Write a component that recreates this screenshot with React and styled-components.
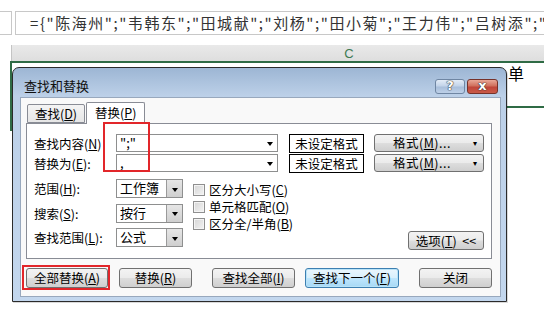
import React from "react";
import styled, { createGlobalStyle } from "styled-components";

const GlobalStyle = createGlobalStyle`
  html, body {
    margin: 0;
    padding: 0;
    background: #fff;
  }
  body {
    font-family: "Noto Sans CJK SC", "Liberation Sans", sans-serif;
    font-size: 12px;
    color: #000;
  }
`;

const App = () => {
  return (
    <Page>
      <GlobalStyle />
      <FormulaRow>
        <NameBox />
        <FormulaBox>
          ={"{"}"陈海州";"韦韩东";"田城献";"刘杨";"田小菊";"王力伟";"吕树添";"李珏"
        </FormulaBox>
      </FormulaRow>
      <HeaderRow>
        <ColHead width={187} />
        <ColHead width={300} active>
          C
        </ColHead>
        <ColHead width={46} />
      </HeaderRow>
      <SheetArea>
        <Gutter />
        <Range>
          <CellText>单</CellText>
          <RowLine />
        </Range>
      </SheetArea>

      <Dialog>
        <TitleBar>
          <Title>查找和替换</Title>
          <Controls>
            <CaptionButton>?</CaptionButton>
            <CaptionButton close>x</CaptionButton>
          </Controls>
        </TitleBar>
        <Client>
          <Tabs>
            <Tab>
              查找(<u>D</u>)
            </Tab>
            <Tab selected>
              替换(<u>P</u>)
            </Tab>
          </Tabs>
          <Panel>
            <Mark />
            <FieldRow>
              <Label>
                查找内容(<u>N</u>)
              </Label>
              <Combo>
                <ComboText>";"</ComboText>
                <DropArrow />
              </Combo>
              <FormatBox>未设定格式</FormatBox>
              <FormatButton>
                <span>
                  格式(<u>M</u>)...
                </span>
                <Tick>▾</Tick>
              </FormatButton>
            </FieldRow>
            <FieldRow>
              <Label>
                替换为(<u>E</u>):
              </Label>
              <Combo>
                <ComboText>,</ComboText>
                <DropArrow />
              </Combo>
              <FormatBox>未设定格式</FormatBox>
              <FormatButton>
                <span>
                  格式(<u>M</u>)...
                </span>
                <Tick>▾</Tick>
              </FormatButton>
            </FieldRow>
            <Lower>
              <SelectCol>
                <SelectRow>
                  <Label>
                    范围(<u>H</u>):
                  </Label>
                  <Select>
                    <ComboText>工作簿</ComboText>
                    <DropArrow gray />
                  </Select>
                </SelectRow>
                <SelectRow>
                  <Label>
                    搜索(<u>S</u>):
                  </Label>
                  <Select>
                    <ComboText>按行</ComboText>
                    <DropArrow gray />
                  </Select>
                </SelectRow>
                <SelectRow>
                  <Label>
                    查找范围(<u>L</u>):
                  </Label>
                  <Select>
                    <ComboText>公式</ComboText>
                    <DropArrow gray />
                  </Select>
                </SelectRow>
              </SelectCol>
              <CheckCol>
                <CheckRow>
                  <Box />
                  <span>
                    区分大小写(<u>C</u>)
                  </span>
                </CheckRow>
                <CheckRow>
                  <Box />
                  <span>
                    单元格匹配(<u>O</u>)
                  </span>
                </CheckRow>
                <CheckRow>
                  <Box />
                  <span>
                    区分全/半角(<u>B</u>)
                  </span>
                </CheckRow>
              </CheckCol>
              <OptionsButton>
                选项(<u>T</u>)&nbsp;&nbsp;&lt;&lt;
              </OptionsButton>
            </Lower>
          </Panel>
          <ButtonRow>
            <Button width={82} marked>
              全部替换(<u>A</u>)
            </Button>
            <Button width={73} gap={11}>
              替换(<u>R</u>)
            </Button>
            <Button width={83} gap={20}>
              查找全部(<u>I</u>)
            </Button>
            <Button width={94} gap={10} focused>
              查找下一个(<u>F</u>)
            </Button>
            <Button width={73} gap={20}>
              关闭
            </Button>
          </ButtonRow>
        </Client>
      </Dialog>
    </Page>
  );
};

export default App;

const Page = styled.div`
  position: relative;
  width: 544px;
  height: 309px;
  overflow: hidden;
  padding-top: 11px;
  box-sizing: border-box;
`;

const FormulaRow = styled.div`
  display: flex;
  height: 24px;
  gap: 3px;
`;

const NameBox = styled.div`
  width: 11px;
  border: 1px solid #c8c8c8;
  border-left: none;
`;

const FormulaBox = styled.div`
  flex: 1;
  border: 1px solid #c8c8c8;
  border-right: none;
  padding-left: 14px;
  font-size: 15px;
  line-height: 22px;
  color: #333;
  white-space: nowrap;
  overflow: hidden;
  letter-spacing: 1.55px;
`;

const HeaderRow = styled.div`
  display: flex;
  margin: 10px 0 0 11px;
  height: 16px;
  background: linear-gradient(#e9e9e9, #dedede);
  border-left: 1px solid #c4c4c4;
`;

const ColHead = styled.div`
  width: ${(p) => p.width}px;
  flex-shrink: 0;
  text-align: center;
  font-family: "Liberation Sans", sans-serif;
  font-size: 13px;
  line-height: 18px;
  color: ${(p) => (p.active ? "#3d7a52" : "#444")};
`;

const SheetArea = styled.div`
  display: flex;
  height: 70px;
`;

const Gutter = styled.div`
  width: 10px;
`;

const Range = styled.div`
  position: relative;
  flex: 1;
  border-top: 2px solid #2f6b45;
  border-left: 2px solid #2f6b45;
`;

const CellText = styled.div`
  position: absolute;
  left: 496px;
  top: 1px;
  font-size: 16px;
  line-height: 18px;
`;

const RowLine = styled.div`
  position: absolute;
  left: 494px;
  right: 0;
  top: 43px;
  height: 2px;
  background: #2f6b45;
`;

/* dialog floats over the sheet */
const Dialog = styled.div`
  position: absolute;
  left: 12px;
  top: 67px;
  width: 495px;
  height: 235px;
  box-sizing: border-box;
  border: 1px solid #2b2b2b;
  border-radius: 7px 7px 0 0;
  background: linear-gradient(#9db6d4, #bcd0e8 28px, #c3d7ee);
  display: flex;
  flex-direction: column;
  box-shadow: 1px 1px 0 rgba(0, 0, 0, 0.15);
`;

const TitleBar = styled.div`
  height: 29px;
  display: flex;
  align-items: flex-start;
  justify-content: space-between;
  padding: 0 8px 0 11px;
  flex-shrink: 0;
`;

const Title = styled.div`
  font-size: 13px;
  line-height: 14px;
  margin-top: 11px;
  color: #111;
`;

const Controls = styled.div`
  display: flex;
  gap: 2px;
  margin-top: 11px;
`;

const CaptionButton = styled.div`
  width: ${(p) => (p.close ? 31 : 30)}px;
  height: 15px;
  box-sizing: border-box;
  border: 1px solid ${(p) => (p.close ? "#76322a" : "#6f86a3")};
  border-radius: 3px;
  background: ${(p) =>
    p.close
      ? "linear-gradient(#e9a797, #d0705d 45%, #c0463a 55%, #c95a48)"
      : "linear-gradient(#e3ecf7, #c3d4e9 45%, #a9bfdb 55%, #bdd0e8)"};
  color: #fff;
  font-family: "DejaVu Sans", sans-serif;
  font-weight: bold;
  font-size: 13px;
  line-height: 12px;
  text-align: center;
  text-shadow: 0 0 1px #333, 0 0 1px #333, 0 0 1px #333;
`;

const Client = styled.div`
  flex: 1;
  margin: 0 5px 4px 7px;
  background: #f9f9f9;
  border: 1px solid #98a8bd;
  padding: 4px 0 0 5px;
  display: flex;
  flex-direction: column;
`;

const Tabs = styled.div`
  display: flex;
  align-items: flex-end;
  padding-left: 1px;
  position: relative;
  z-index: 1;
`;

const Tab = styled.div`
  box-sizing: border-box;
  height: ${(p) => (p.selected ? 22 : 19)}px;
  padding: 0 ${(p) => (p.selected ? 8 : 7)}px;
  margin-left: ${(p) => (p.selected ? 1 : 0)}px;
  margin-bottom: ${(p) => (p.selected ? -1 : 0)}px;
  border: 1px solid #898c95;
  border-bottom: ${(p) => (p.selected ? "none" : "1px solid #898c95")};
  background: ${(p) => (p.selected ? "#fff" : "linear-gradient(#f4f4f4, #e6e6e6)")};
  font-size: 12.5px;
  line-height: ${(p) => (p.selected ? 19 : 17)}px;
  border-radius: 2px 2px 0 0;
`;

const Panel = styled.div`
  position: relative;
  width: 466px;
  height: 136px;
  box-sizing: border-box;
  border: 1px solid #898c95;
  background: #fff;
  padding: 10px 7px 8px 7px;
  display: flex;
  flex-direction: column;
  gap: 2px;
`;

const Mark = styled.div`
  position: absolute;
  left: 76px;
  top: -2px;
  width: 47px;
  height: 50px;
  box-sizing: border-box;
  border: 2px solid #e2262a;
  z-index: 2;
`;

const FieldRow = styled.div`
  display: flex;
  align-items: center;
  height: 18px;
`;

const Label = styled.div`
  width: 82px;
  flex-shrink: 0;
  font-size: 12.5px;
  white-space: nowrap;
`;

const Combo = styled.div`
  width: 162px;
  height: 18px;
  box-sizing: border-box;
  border: 1px solid #8e8f8f;
  display: flex;
  align-items: stretch;
  background: #fff;
`;

const Select = styled(Combo)`
  width: 67px;
  height: 19px;
`;

const ComboText = styled.div`
  flex: 1;
  padding-left: 3px;
  font-size: 13px;
  line-height: 16px;
  white-space: nowrap;
`;

const DropArrow = styled.div`
  width: 16px;
  box-sizing: border-box;
  background: ${(p) => (p.gray ? "linear-gradient(#e6e6e6, #cfcfcf)" : "#fff")};
  border-left: 1px solid ${(p) => (p.gray ? "#9a9a9a" : "#fff")};
  display: flex;
  align-items: center;
  justify-content: center;
  &::after {
    content: "";
    border-left: 3px solid transparent;
    border-right: 3px solid transparent;
    border-top: 4px solid #000;
    margin-top: 2px;
  }
`;

const FormatBox = styled.div`
  width: 75px;
  height: 19px;
  box-sizing: border-box;
  margin-left: 11px;
  border: 1px solid #000;
  font-size: 12.5px;
  line-height: 17px;
  text-align: center;
`;

const buttonFace = `
  box-sizing: border-box;
  border: 1px solid #707070;
  border-radius: 3px;
  background: linear-gradient(#f3f3f3, #ebebeb 48%, #dddddd 52%, #cfcfcf);
  font-size: 12.5px;
  text-align: center;
  white-space: nowrap;
`;

const FormatButton = styled.div`
  ${buttonFace}
  width: 110px;
  height: 18px;
  margin-left: 10px;
  line-height: 16px;
  position: relative;
  padding-right: 14px;
  letter-spacing: 0.5px;
`;

const Tick = styled.span`
  position: absolute;
  right: 6px;
  top: 0;
  font-size: 8px;
`;

const Lower = styled.div`
  flex: 1;
  display: flex;
  margin-top: 5px;
`;

const SelectCol = styled.div`
  display: flex;
  flex-direction: column;
  gap: 5.5px;
  width: 159px;
`;

const SelectRow = styled.div`
  display: flex;
  align-items: center;
  height: 19px;
`;

const CheckCol = styled.div`
  display: flex;
  flex-direction: column;
  padding-top: 2px;
  flex: 1;
`;

const CheckRow = styled.div`
  display: flex;
  align-items: center;
  gap: 4px;
  height: 17px;
  font-size: 12.5px;
  line-height: 15px;
  white-space: nowrap;
`;

const Box = styled.div`
  width: 12px;
  height: 12px;
  box-sizing: border-box;
  border: 1px solid #8f8f8f;
  background: linear-gradient(135deg, #d6d6d6, #f3f3f3);
  box-shadow: inset 0 0 0 1px #f4f4f4;
`;

const OptionsButton = styled.div`
  ${buttonFace}
  align-self: flex-end;
  width: 76px;
  height: 19px;
  line-height: 17px;
  margin-right: 0;
`;

const ButtonRow = styled.div`
  display: flex;
  margin-top: 9px;
`;

const Button = styled.div`
  ${buttonFace}
  position: relative;
  width: ${(p) => p.width}px;
  height: 20px;
  line-height: 18px;
  margin-left: ${(p) => p.gap || 0}px;
  ${(p) =>
    p.focused &&
    `
    border-color: #3c7fb1;
    box-shadow: inset 0 0 0 1px #b8e3f8;
    background: linear-gradient(#eaf6fd, #d9f0fc 48%, #bee6fd 52%, #a7d9f5);
  `}
  ${(p) =>
    p.marked &&
    `
    &::after {
      content: "";
      position: absolute;
      left: -5px;
      top: -4px;
      right: -3px;
      bottom: -3px;
      border: 2px solid #e2262a;
    }
  `}
`;
